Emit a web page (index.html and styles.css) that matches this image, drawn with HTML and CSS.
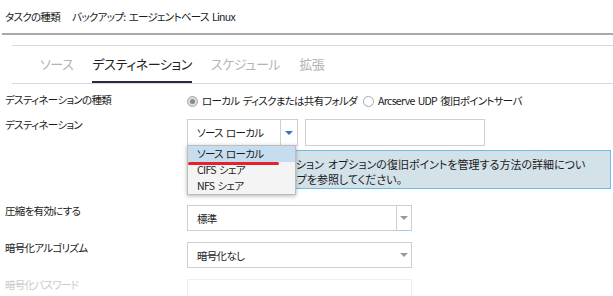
FILE: index.html
```html
<!DOCTYPE html>
<html lang="ja">
<head>
  <meta charset="UTF-8">
  <title>バックアップ設定</title>
  <link rel="stylesheet" href="styles.css">
</head>
<body>
  <div class="task-type">
    <span>タスクの種類</span>
    <span class="task-value">バックアップ: エージェントベース Linux</span>
  </div>

  <div class="tab-bar">
    <ul class="tabs">
      <li class="tab">ソース</li>
      <li class="tab active">デスティネーション</li>
      <li class="tab">スケジュール</li>
      <li class="tab">拡張</li>
    </ul>
  </div>

  <div class="form">
    <div class="row">
      <div class="label">デスティネーションの種類</div>
      <div class="field radios">
        <label class="radio"><span class="dot checked"></span>ローカル ディスクまたは共有フォルダ</label>
        <label class="radio"><span class="dot"></span>Arcserve UDP 復旧ポイントサーバ</label>
      </div>
    </div>

    <div class="row row-info">
      <div class="label">デスティネーション</div>
      <div class="field">
        <div class="dest-line">
          <div class="select select-small">
            <span class="value">ソース ローカル</span>
            <span class="arrow-box"><span class="arrow blue"></span></span>
            <!-- open list of the select -->
            <ul class="menu">
              <li class="selected">ソース ローカル</li>
              <li>CIFS シェア</li>
              <li>NFS シェア</li>
              <li class="mark"></li>
            </ul>
          </div>
          <div class="text-input path-input"></div>
        </div>
        <div class="info">
          これらのデスティネーション オプションの復旧ポイントを管理する方法の詳細につい<br>
          ては、オンライン ヘルプを参照してください。
        </div>
      </div>
    </div>

    <div class="row">
      <div class="label">圧縮を有効にする</div>
      <div class="field">
        <div class="select select-wide">
          <span class="value">標準</span>
          <span class="arrow-box split"><span class="arrow"></span></span>
        </div>
      </div>
    </div>

    <div class="row">
      <div class="label">暗号化アルゴリズム</div>
      <div class="field">
        <div class="select select-wide">
          <span class="value">暗号化なし</span>
          <span class="arrow-box"><span class="arrow"></span></span>
        </div>
      </div>
    </div>

    <div class="row disabled">
      <div class="label">暗号化パスワード</div>
      <div class="field">
        <div class="text-input wide-input"></div>
      </div>
    </div>
  </div>
</body>
</html>
```

FILE: styles.css
```css
body {
  margin: 0;
  font-family: "Noto Sans CJK JP", "Noto Sans", sans-serif;
  font-size: 10.5px;
  letter-spacing: -0.7px;
  word-spacing: 1.5px;
  font-feature-settings: "palt";
  color: #1a1a1a;
  background: #fff;
  overflow: hidden;
}

/* task header */
.task-type {
  margin-left: 2px;
  padding: 9px 0 8px 3px;
  line-height: 16px;
  border-bottom: 2px solid #a9a9a9;
}

.task-value {
  margin-left: 9px;
}

/* tabs */
.tab-bar {
  margin: 10px 0 0 12px;
  border-top: 1px solid #d3dbe1;
}

.tabs {
  list-style: none;
  margin: 0;
  padding: 8px 0 0 28px;
  display: flex;
  gap: 19px;
  border-bottom: 1px solid #d3dbe1;
  font-size: 13px;
  letter-spacing: -0.4px;
}

.tab {
  line-height: 20px;
  padding-bottom: 7px;
  border-bottom: 2px solid transparent;
  color: #b4b4b4;
}

.tab.active {
  color: #222;
  border-bottom-color: #2b2b3b;
}

/* form rows */
.form {
  padding: 10px 0 0 5px;
}

.row {
  display: flex;
  align-items: flex-start;
  margin-bottom: 11px;
}

.row-info {
  margin-bottom: 16px;
}

.label {
  width: 182px;
  flex-shrink: 0;
  line-height: 12px;
}

.radios {
  display: flex;
  gap: 6px;
  line-height: 14px;
}

.radio {
  display: flex;
  align-items: center;
  gap: 4px;
}

.dot {
  width: 9px;
  height: 9px;
  border: 1px solid #a8a8a8;
  border-radius: 50%;
  background: #fff;
  display: flex;
  align-items: center;
  justify-content: center;
}

.dot.checked {
  background: #dcdcdc;
}

.dot.checked::after {
  content: "";
  width: 5px;
  height: 5px;
  border-radius: 50%;
  background: #8a8a8a;
}

/* selects and inputs */
.dest-line {
  display: flex;
  gap: 7px;
}

.select {
  position: relative;
  display: flex;
  align-items: center;
  border: 1px solid #cfcfcf;
  background: #fff;
  box-sizing: border-box;
}

.select-small {
  width: 111px;
  height: 27px;
}

.select-wide {
  width: 225px;
  height: 26px;
}

.value {
  flex: 1;
  padding-left: 9px;
}

.arrow-box {
  width: 15px;
  height: 100%;
  display: flex;
  align-items: center;
  justify-content: center;
  box-sizing: border-box;
}

.select-small .arrow-box {
  width: 17px;
  border-left: 1px solid #cfcfcf;
}

.arrow-box.split {
  border-left: 1px solid #cfcfcf;
  border-bottom: 1px solid #a9c9e6;
  margin-bottom: -1px;
  height: calc(100% + 1px);
}

.arrow {
  width: 0;
  height: 0;
  border-left: 4px solid transparent;
  border-right: 4px solid transparent;
  border-top: 4px solid #9a9a9a;
}

.arrow.blue {
  border-top-color: #2f78bf;
}

.text-input {
  border: 1px solid #cfcfcf;
  box-sizing: border-box;
}

.path-input {
  width: 180px;
  height: 27px;
}

.wide-input {
  width: 225px;
  height: 26px;
  border-color: #efefef;
}

.disabled .label {
  color: #c9c9c9;
}

/* info box */
.info {
  margin-top: 4px;
  width: 424px;
  height: 39px;
  box-sizing: border-box;
  padding: 6px 8px 0;
  font-size: 11px;
  letter-spacing: 0;
  line-height: 15px;
  background: #d3e1e9;
  border: 1px solid #69bdee;
}

/* open dropdown */
.menu {
  position: absolute;
  top: 100%;
  left: -1px;
  width: 109px;
  margin: 0;
  padding: 0;
  list-style: none;
  background: #f4f4f4;
  border: 1px solid #bdbdbd;
  box-shadow: 0 1px 4px rgba(0, 0, 0, 0.3);
  box-sizing: border-box;
  z-index: 2;
}

.menu li {
  height: 16px;
  line-height: 16px;
  padding-left: 9px;
}

.menu li.selected {
  background: #c6ddef;
}

.menu li.mark {
  position: absolute;
  top: 16px;
  left: 0;
  width: 91px;
  height: 3px;
  padding: 0;
  border-radius: 2px;
  background: #e8202a;
}
```
